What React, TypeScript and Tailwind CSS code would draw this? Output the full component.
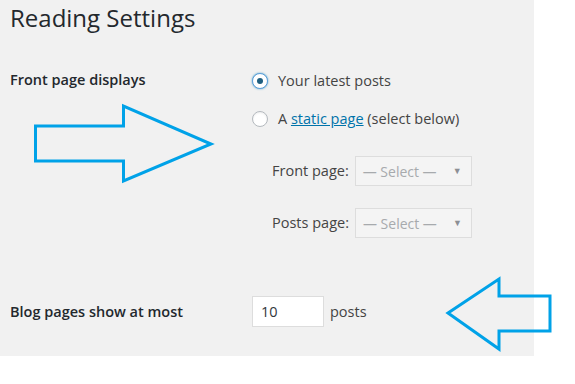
import React from "react";

const font = { fontFamily: '"Open Sans", "Noto Sans", sans-serif' };

function Radio({ checked }: { checked?: boolean }) {
  return (
    <span
      className={`flex items-center justify-center w-[16px] h-[16px] rounded-full bg-white border ${
        checked
          ? "border-[#5b9dd9] shadow-[0_0_2px_rgba(30,140,190,0.8)]"
          : "border-[#b4b9be] shadow-[inset_0_1px_2px_rgba(0,0,0,0.07)]"
      }`}
    >
      {checked && <span className="w-[6px] h-[6px] rounded-full bg-[#1e5f80]" />}
    </span>
  );
}

function Select() {
  return (
    <div className="flex items-center justify-between w-[117px] h-[30px] pl-[7px] pr-[9px] border border-[#dddddd] bg-[#f4f4f4] text-[14px] text-[#a7aaad]">
      <span>— Select —</span>
      <span className="text-[9px] text-[#8c8f94]">▼</span>
    </div>
  );
}

export default function App() {
  return (
    <div className="relative w-[575px] h-[384px] bg-white" style={font}>
      <div className="w-[534px] h-[356px] bg-[#f1f1f1] pl-[10px] text-[#23282d]">
        <h1 className="pt-[3px] text-[24px] leading-[30px] font-normal">Reading Settings</h1>

        <div className="flex mt-[37px]">
          <div className="w-[242px] text-[14.5px] leading-[20px] font-semibold">Front page displays</div>
          <div className="flex flex-col text-[14.5px] text-[#444]">
            <label className="flex items-center gap-[10px] h-[22px]">
              <Radio checked />
              <span>Your latest posts</span>
            </label>
            <label className="flex items-center gap-[10px] h-[22px] mt-[16px]">
              <Radio />
              <span>
                A <a className="text-[#0073aa] underline">static page</a> (select below)
              </span>
            </label>
            <div className="flex items-center gap-[6px] pl-[20px] mt-[26px]">
              <span>Front page:</span>
              <Select />
            </div>
            <div className="flex items-center gap-[6px] pl-[20px] mt-[22px]">
              <span>Posts page:</span>
              <Select />
            </div>
          </div>
        </div>

        <div className="flex items-center mt-[58px]">
          <div className="w-[242px] text-[14.5px] font-semibold">Blog pages show at most</div>
          <div className="flex items-center gap-[6px] text-[14.5px] text-[#444]">
            <div className="w-[72px] h-[31px] pl-[8px] flex items-center bg-white border border-[#dddddd] text-[#32373c]">
              10
            </div>
            <span>posts</span>
          </div>
        </div>
      </div>

      <svg className="absolute top-0 left-0 pointer-events-none" width="575" height="384">
        <polygon
          points="35.5,126 123.5,126 123.5,106 211,144 123.5,181 123.5,161 35.5,161"
          fill="none"
          stroke="#00a2e8"
          strokeWidth="3"
        />
        <polygon
          points="448,313 499,279 499,296 550,296 550,331 499,331 499,349"
          fill="none"
          stroke="#00a2e8"
          strokeWidth="3"
        />
      </svg>
    </div>
  );
}
